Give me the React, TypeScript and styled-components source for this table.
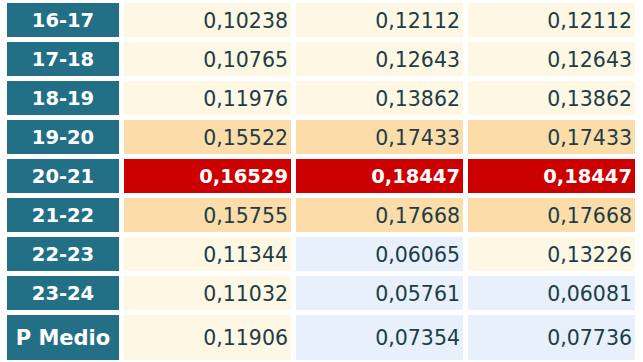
import React from "react";
import styled, { createGlobalStyle } from "styled-components";

const Global = createGlobalStyle`
  html, body { margin: 0; padding: 0; background: #ffffff; }
  body { font-family: "DejaVu Sans", Verdana, sans-serif; }
`;

type Tone = "cream" | "orange" | "red" | "blue";

const bg: Record<Tone, string> = {
  cream: "#fdf7e3",
  orange: "#fcdca8",
  red: "#cc0000",
  blue: "#e8f1fb",
};

const Table = styled.div`
  display: grid;
  grid-template-columns: 112px 167px 167px 167px;
  grid-template-rows: repeat(8, 34px) 45px;
  column-gap: 5px;
  row-gap: 5px;
  padding: 3px 0 0 7px;
`;

const Label = styled.div<{ $big?: boolean }>`
  background: #236f86;
  color: #ffffff;
  font-weight: bold;
  font-size: ${(p) => (p.$big ? "21px" : "19.5px")};
  display: flex;
  align-items: center;
  justify-content: center;
  padding-top: 1px;
  white-space: nowrap;
`;

const Cell = styled.div<{ $tone: Tone }>`
  background: ${(p) => bg[p.$tone]};
  color: ${(p) => (p.$tone === "red" ? "#ffffff" : "#1d3d47")};
  font-weight: ${(p) => (p.$tone === "red" ? "bold" : "normal")};
  font-size: ${(p) => (p.$tone === "red" ? "19.5px" : "20.5px")};
  display: flex;
  align-items: center;
  justify-content: flex-end;
  padding-right: 3px;
  padding-top: 1px;
`;

const rows: { label: string; vals: [string, Tone][] }[] = [
  { label: "16-17", vals: [["0,10238", "cream"], ["0,12112", "cream"], ["0,12112", "cream"]] },
  { label: "17-18", vals: [["0,10765", "cream"], ["0,12643", "cream"], ["0,12643", "cream"]] },
  { label: "18-19", vals: [["0,11976", "cream"], ["0,13862", "cream"], ["0,13862", "cream"]] },
  { label: "19-20", vals: [["0,15522", "orange"], ["0,17433", "orange"], ["0,17433", "orange"]] },
  { label: "20-21", vals: [["0,16529", "red"], ["0,18447", "red"], ["0,18447", "red"]] },
  { label: "21-22", vals: [["0,15755", "orange"], ["0,17668", "orange"], ["0,17668", "orange"]] },
  { label: "22-23", vals: [["0,11344", "cream"], ["0,06065", "blue"], ["0,13226", "cream"]] },
  { label: "23-24", vals: [["0,11032", "cream"], ["0,05761", "blue"], ["0,06081", "blue"]] },
  { label: "P Medio", vals: [["0,11906", "cream"], ["0,07354", "blue"], ["0,07736", "blue"]] },
];

export default function App() {
  return (
    <>
      <Global />
      <Table>
        {rows.map((r, i) => (
          <React.Fragment key={r.label}>
            <Label $big={i === rows.length - 1}>{r.label}</Label>
            {r.vals.map(([v, t], j) => (
              <Cell key={j} $tone={t}>
                {v}
              </Cell>
            ))}
          </React.Fragment>
        ))}
      </Table>
    </>
  );
}
